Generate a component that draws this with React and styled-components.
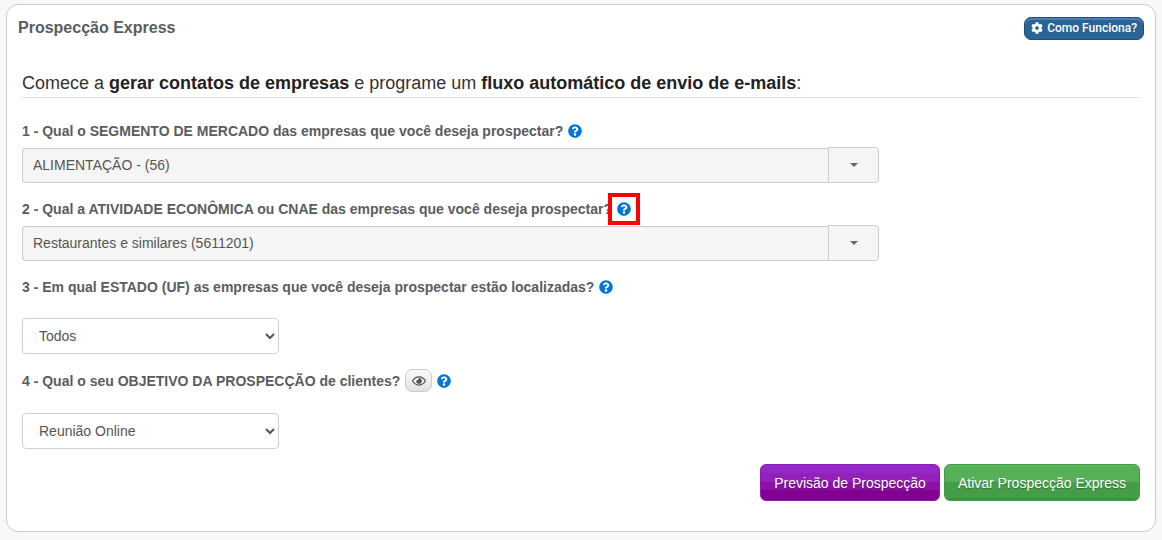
import React, {useState} from 'react'
import styled, {createGlobalStyle} from 'styled-components';
import { FaCog, FaQuestionCircle, FaRegEye } from 'react-icons/fa';

const GlobalStyle = createGlobalStyle`
    * {
        box-sizing: border-box;
    }
    body {
        margin: 0;
        background: #f7f8fa;
        color: #5a5d60;
        font-family: "Liberation Sans", Arial, sans-serif;
        font-size: 14px;
        line-height: 20px;
    }
    button, input, select {
        font-family: inherit;
        font-size: 14px;
    }
`
const StyledPanel = styled.main`
    margin: 4px 6px 8px;
    padding: 12px 11px 30px;
    background: #fff;
    border: 1px solid #c8cbcd;
    border-radius: 12px;
`
const StyledHeader = styled.header`
    display: flex;
    justify-content: space-between;
    align-items: flex-start;
`
const StyledTitle = styled.h1`
    margin: 0;
    font-size: 16px;
    line-height: 22px;
`
const StyledHelpButton = styled.button`
    display: flex;
    align-items: center;
    gap: 4px;
    height: 23px;
    padding: 0 6px 1px;
    border: 1px solid #1f4f80;
    border-radius: 7px;
    background: #2a6496;
    box-shadow: inset 0 2px 0 #4a7db4;
    color: #fff;
    font-family: Roboto, sans-serif;
    font-size: 12px;
    font-weight: 500;
    white-space: nowrap;
    cursor: pointer;
`
const StyledContent = styled.div`
    padding: 32px 4px 0;
`
const StyledIntro = styled.h2`
    margin: 0 0 23px;
    padding-bottom: 3px;
    border-bottom: 1px solid #e1e3e5;
    color: #333;
    font-size: 18px;
    font-weight: normal;
    line-height: 22px;

    b {
        color: #222;
    }
`
const StyledField = styled.div`
    display: flex;
    flex-direction: column;
    align-items: flex-start;
    gap: ${props => props.$loose ? '21px' : '6px'};
    margin-bottom: ${props => props.$loose ? '15px' : '16px'};
`
const StyledQuestion = styled.div`
    display: flex;
    flex-wrap: wrap;
    align-items: center;
    gap: 5px;

    label {
        font-weight: bold;
    }
`
const StyledHint = styled.button`
    position: relative;
    display: flex;
    padding: 0;
    border: 0;
    background: none;
    color: #0275d8;
    cursor: pointer;
`
const StyledMarker = styled.span`
    position: absolute;
    inset: -9px;
    border: 4px solid #f00;
    pointer-events: none;
`
const StyledEyeButton = styled.button`
    display: flex;
    align-items: center;
    justify-content: center;
    width: 27px;
    height: 23px;
    padding: 0;
    border: 1px solid #ccc;
    border-radius: 7px;
    background: linear-gradient(#fafafa, #e2e2e2);
    color: #4c4f52;
    cursor: pointer;
`
const StyledCombo = styled.div`
    display: flex;
    align-items: center;
    width: 100%;
    max-width: 857px;
`
const StyledComboInput = styled.input`
    flex: 1;
    min-width: 0;
    height: 35px;
    padding: 0 10px;
    border: 1px solid #c9cecf;
    border-right: 0;
    border-radius: 4px 0 0 4px;
    background: #f5f5f5;
    color: #555;
    outline: none;
`
const StyledComboToggle = styled.button`
    display: flex;
    align-items: center;
    justify-content: center;
    width: 51px;
    height: 36px;
    border: 1px solid #c9cecf;
    border-radius: 0 4px 4px 0;
    background: #f5f5f5;
    cursor: pointer;
`
const StyledCaret = styled.span`
    border-top: 4px solid #666;
    border-left: 4px solid transparent;
    border-right: 4px solid transparent;
`
const StyledSelect = styled.select`
    width: 257px;
    max-width: 100%;
    height: 36px;
    padding: 0 0 0 12px;
    border: 1px solid #ccd1d2;
    border-radius: 4px;
    background: #fff;
    color: #555;
`
const StyledActions = styled.div`
    display: flex;
    flex-wrap: wrap;
    justify-content: flex-end;
    gap: 4px;
`
const StyledAction = styled.button`
    height: 37px;
    padding: 0 13px;
    border: 1px solid ${props => props.$border};
    border-radius: 6px;
    background: ${props => props.$fill};
    color: #fff;
    text-shadow: 0 1px 1px rgba(0, 0, 0, 0.3);
    white-space: nowrap;
    cursor: pointer;
`

const purple = 'linear-gradient(#9428c8 0 22%, #9320b8 22% 48%, #8b10a5 48% 70%, #820090 70%)'
const green = 'linear-gradient(#5cb85c 0 6%, #55b057 6% 50%, #469d48 50% 94%, #3c903f 94%)'

const Hint = ({marked}) => {
    return (
        <StyledHint type='button' aria-label='Ajuda'>
            <FaQuestionCircle size={14} />
            {marked && <StyledMarker />}
        </StyledHint>
    )
}

const ComboField = ({id, question, value, marked}) => {
    return (
        <StyledField>
            <StyledQuestion>
                <label htmlFor={id}>{question}</label>
                <Hint marked={marked} />
            </StyledQuestion>
            <StyledCombo>
                <StyledComboInput id={id} type='text' value={value} readOnly />
                <StyledComboToggle type='button' aria-label='Abrir lista'><StyledCaret /></StyledComboToggle>
            </StyledCombo>
        </StyledField>
    )
}

const SelectField = ({id, question, options, preview}) => {

    const [selected, setSelected] = useState(options[0]);

    return (
        <StyledField $loose>
            <StyledQuestion>
                <label htmlFor={id}>{question}</label>
                {preview && <StyledEyeButton type='button' aria-label='Visualizar'><FaRegEye size={14} /></StyledEyeButton>}
                <Hint />
            </StyledQuestion>
            <StyledSelect id={id} value={selected} onChange={e => setSelected(e.target.value)}>
                {options.map(option => {
                    return <option key={option}>{option}</option>
                })}
            </StyledSelect>
        </StyledField>
    )
}

const App = () => {
    return (
        <StyledPanel>
            <GlobalStyle />
            <StyledHeader>
                <StyledTitle>Prospecção Express</StyledTitle>
                <StyledHelpButton type='button'><FaCog size={12} />Como Funciona?</StyledHelpButton>
            </StyledHeader>
            <StyledContent>
                <StyledIntro>
                    Comece a <b>gerar contatos de empresas</b> e programe um <b>fluxo automático de envio de e-mails</b>:
                </StyledIntro>
                <ComboField
                    id='segmento'
                    question='1 - Qual o SEGMENTO DE MERCADO das empresas que você deseja prospectar?'
                    value='ALIMENTAÇÃO - (56)'
                />
                <ComboField
                    id='atividade'
                    question='2 - Qual a ATIVIDADE ECONÔMICA ou CNAE das empresas que você deseja prospectar?'
                    value='Restaurantes e similares (5611201)'
                    marked
                />
                <SelectField
                    id='estado'
                    question='3 - Em qual ESTADO (UF) as empresas que você deseja prospectar estão localizadas?'
                    options={['Todos']}
                />
                <SelectField
                    id='objetivo'
                    question='4 - Qual o seu OBJETIVO DA PROSPECÇÃO de clientes?'
                    options={['Reunião Online']}
                    preview
                />
                <StyledActions>
                    <StyledAction type='button' $fill={purple} $border='#8a1cae'>Previsão de Prospecção</StyledAction>
                    <StyledAction type='button' $fill={green} $border='#459a48'>Ativar Prospecção Express</StyledAction>
                </StyledActions>
            </StyledContent>
        </StyledPanel>
    );
}

export default App;
